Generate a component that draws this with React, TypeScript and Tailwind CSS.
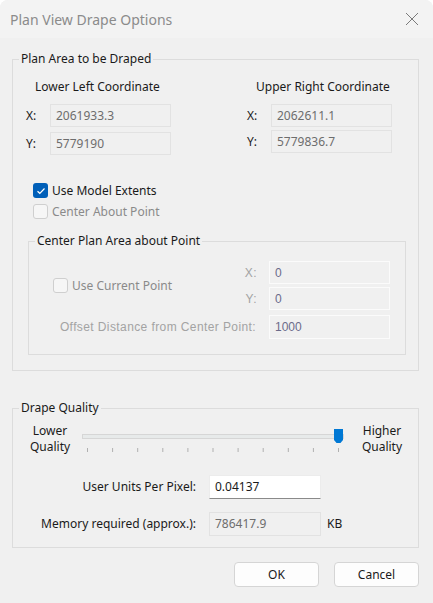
import React from "react";

const ui = { fontFamily: '"Noto Sans", "Open Sans", sans-serif' };
const old = { fontFamily: '"Liberation Sans", "DejaVu Sans", sans-serif' };

function ReadOnlyBox({ value, inner }: { value: string; inner?: boolean }) {
  return (
    <div
      className={`w-[121px] h-[23px] flex items-center pl-[5px] text-[12px] ${
        inner ? "border border-[#fbfbfb] text-[#6b6b8a]" : "border border-[#e2e2e2] text-[#6d6d6d]"
      }`}
      style={inner ? old : ui}
    >
      {value}
    </div>
  );
}

function Check({ checked, disabled, label }: { checked?: boolean; disabled?: boolean; label: string }) {
  return (
    <div className="flex items-center h-[21px] gap-[4px]">
      {checked ? (
        <div className="w-[15px] h-[15px] rounded-[3px] bg-[#005fb8] flex items-center justify-center">
          <svg width="10" height="8" viewBox="0 0 10 8">
            <path d="M1.5 4.2 L3.8 6.3 L8.5 1.5" fill="none" stroke="#fff" strokeWidth="1.2" />
          </svg>
        </div>
      ) : (
        <div className="w-[15px] h-[15px] rounded-[3px] border border-[#cfcfcf] bg-[#f6f6f6]" />
      )}
      <span className={`text-[12px] ${disabled ? "text-[#8a8a8a]" : "text-[#1a1a1a]"}`}>{label}</span>
    </div>
  );
}

function Slider() {
  const ticks = [0, 1, 2, 3, 4, 5, 6, 7, 8, 9, 10];
  return (
    <svg width="266" height="28" viewBox="0 0 266 28">
      <rect x="0.5" y="6.5" width="261" height="4" fill="#e7eaea" stroke="#d6d6d6" />
      {ticks.map((i) => (
        <line key={i} x1={5.5 + i * 25.1} y1="20" x2={5.5 + i * 25.1} y2="24" stroke="#b0b0b0" />
      ))}
      <path d="M252 1 H261 V12 L258.5 15 H254.5 L252 12 Z" fill="#0078d4" />
    </svg>
  );
}

export default function App() {
  return (
    <div className="w-[433px] h-[603px] bg-[#f0f0f0] rounded-t-[8px] overflow-hidden flex flex-col" style={ui}>
      <div className="h-[38px] bg-[#f3f3f3] flex items-center justify-between pl-[10px] pr-[14px]">
        <span className="text-[14px] text-[#8b8b8b]">Plan View Drape Options</span>
        <svg width="14" height="14" viewBox="0 0 14 14">
          <path d="M1 1 L13 13 M13 1 L1 13" stroke="#7a7a7a" strokeWidth="1" />
        </svg>
      </div>

      <fieldset className="mt-[13px] ml-[12px] w-[407px] border border-[#dcdcdc] pb-[15px]">
        <legend className="ml-[6px] px-[2px] text-[12px] text-[#1a1a1a] leading-[16px]">Plan Area to be Draped</legend>

        <div className="flex mt-[12px]">
          <div className="ml-[13px] w-[221px]">
            <div className="pl-[9px] text-[12px] text-[#1a1a1a] leading-[16px]">Lower Left Coordinate</div>
            <div className="mt-[9px] flex flex-col gap-[5px]">
              <div className="flex items-center">
                <span className="w-[24px] text-[12px] text-[#1a1a1a]">X:</span>
                <ReadOnlyBox value="2061933.3" />
              </div>
              <div className="flex items-center">
                <span className="w-[24px] text-[12px] text-[#1a1a1a]">Y:</span>
                <ReadOnlyBox value="5779190" />
              </div>
            </div>
          </div>
          <div>
            <div className="pl-[9px] text-[12px] text-[#1a1a1a] leading-[16px]">Upper Right Coordinate</div>
            <div className="mt-[9px] flex flex-col gap-[3px]">
              <div className="flex items-center">
                <span className="w-[24px] text-[12px] text-[#1a1a1a]">X:</span>
                <ReadOnlyBox value="2062611.1" />
              </div>
              <div className="flex items-center">
                <span className="w-[24px] text-[12px] text-[#1a1a1a]">Y:</span>
                <ReadOnlyBox value="5779836.7" />
              </div>
            </div>
          </div>
        </div>

        <div className="ml-[20px] mt-[25px]">
          <Check checked label="Use Model Extents" />
          <Check disabled label="Center About Point" />
        </div>

        <fieldset className="mt-[11px] ml-[15px] w-[378px] border border-[#dcdcdc] pb-[15px] pr-[15px]">
          <legend className="ml-[6px] px-[2px] text-[12px] text-[#1a1a1a] leading-[16px]">Center Plan Area about Point</legend>
          <div className="mt-[12px] flex">
            <div className="flex-1 flex items-center pl-[24px]">
              <Check disabled label="Use Current Point" />
            </div>
            <div className="flex flex-col gap-[3px]">
              <div className="flex items-center justify-end gap-[12px]">
                <span className="text-[12px] tracking-[0.4px] text-[#a3a3a3]" style={old}>X:</span>
                <ReadOnlyBox inner value="0" />
              </div>
              <div className="flex items-center justify-end gap-[12px]">
                <span className="text-[12px] tracking-[0.4px] text-[#a3a3a3]" style={old}>Y:</span>
                <ReadOnlyBox inner value="0" />
              </div>
            </div>
          </div>
          <div className="mt-[5px] flex items-center justify-end gap-[13px]">
            <span className="text-[12px] tracking-[0.4px] text-[#a3a3a3]" style={old}>Offset Distance from Center Point:</span>
            <div className="w-[121px] h-[24px] flex items-center pl-[5px] text-[12px] border border-[#fbfbfb] text-[#6b6b8a]" style={old}>
              1000
            </div>
          </div>
        </fieldset>
      </fieldset>

      <fieldset className="mt-[29px] ml-[12px] w-[407px] border border-[#dcdcdc] pb-[11px]">
        <legend className="ml-[6px] px-[2px] text-[12px] text-[#1a1a1a] leading-[16px]">Drape Quality</legend>
        <div className="mt-[7px] flex items-start">
          <div className="ml-[17px] w-[40px] text-center text-[12px] text-[#1a1a1a] leading-[16px]">
            Lower
            <br />
            Quality
          </div>
          <div className="ml-[12px] mt-[5px]">
            <Slider />
          </div>
          <div className="ml-[13px] w-[42px] text-center text-[12px] text-[#1a1a1a] leading-[16px]">
            Higher
            <br />
            Quality
          </div>
        </div>

        <div className="mt-[19px] flex items-center">
          <span className="w-[183px] text-right text-[12px] text-[#1a1a1a]">User Units Per Pixel:</span>
          <div className="ml-[13px] w-[112px] h-[24px] bg-white border border-[#ececec] border-b-[#8a8a8a] flex items-center pl-[5px] text-[12px] text-[#1a1a1a]">
            0.04137
          </div>
        </div>
        <div className="mt-[13px] flex items-center">
          <span className="w-[183px] text-right text-[12px] text-[#1a1a1a]">Memory required (approx.):</span>
          <div className="ml-[13px] w-[112px] h-[24px] border border-[#e2e2e2] flex items-center pl-[5px] text-[12px] text-[#6d6d6d]">
            786417.9
          </div>
          <span className="ml-[6px] text-[12px] text-[#1a1a1a]">KB</span>
        </div>
      </fieldset>

      <div className="mt-[14px] flex justify-end gap-[15px] pr-[14px]">
        <button className="w-[85px] h-[25px] rounded-[4px] bg-[#fdfdfd] border border-[#d5d5d5] text-[12px] text-[#1a1a1a]">OK</button>
        <button className="w-[85px] h-[25px] rounded-[4px] bg-[#fdfdfd] border border-[#d5d5d5] text-[12px] text-[#1a1a1a]">Cancel</button>
      </div>
    </div>
  );
}
